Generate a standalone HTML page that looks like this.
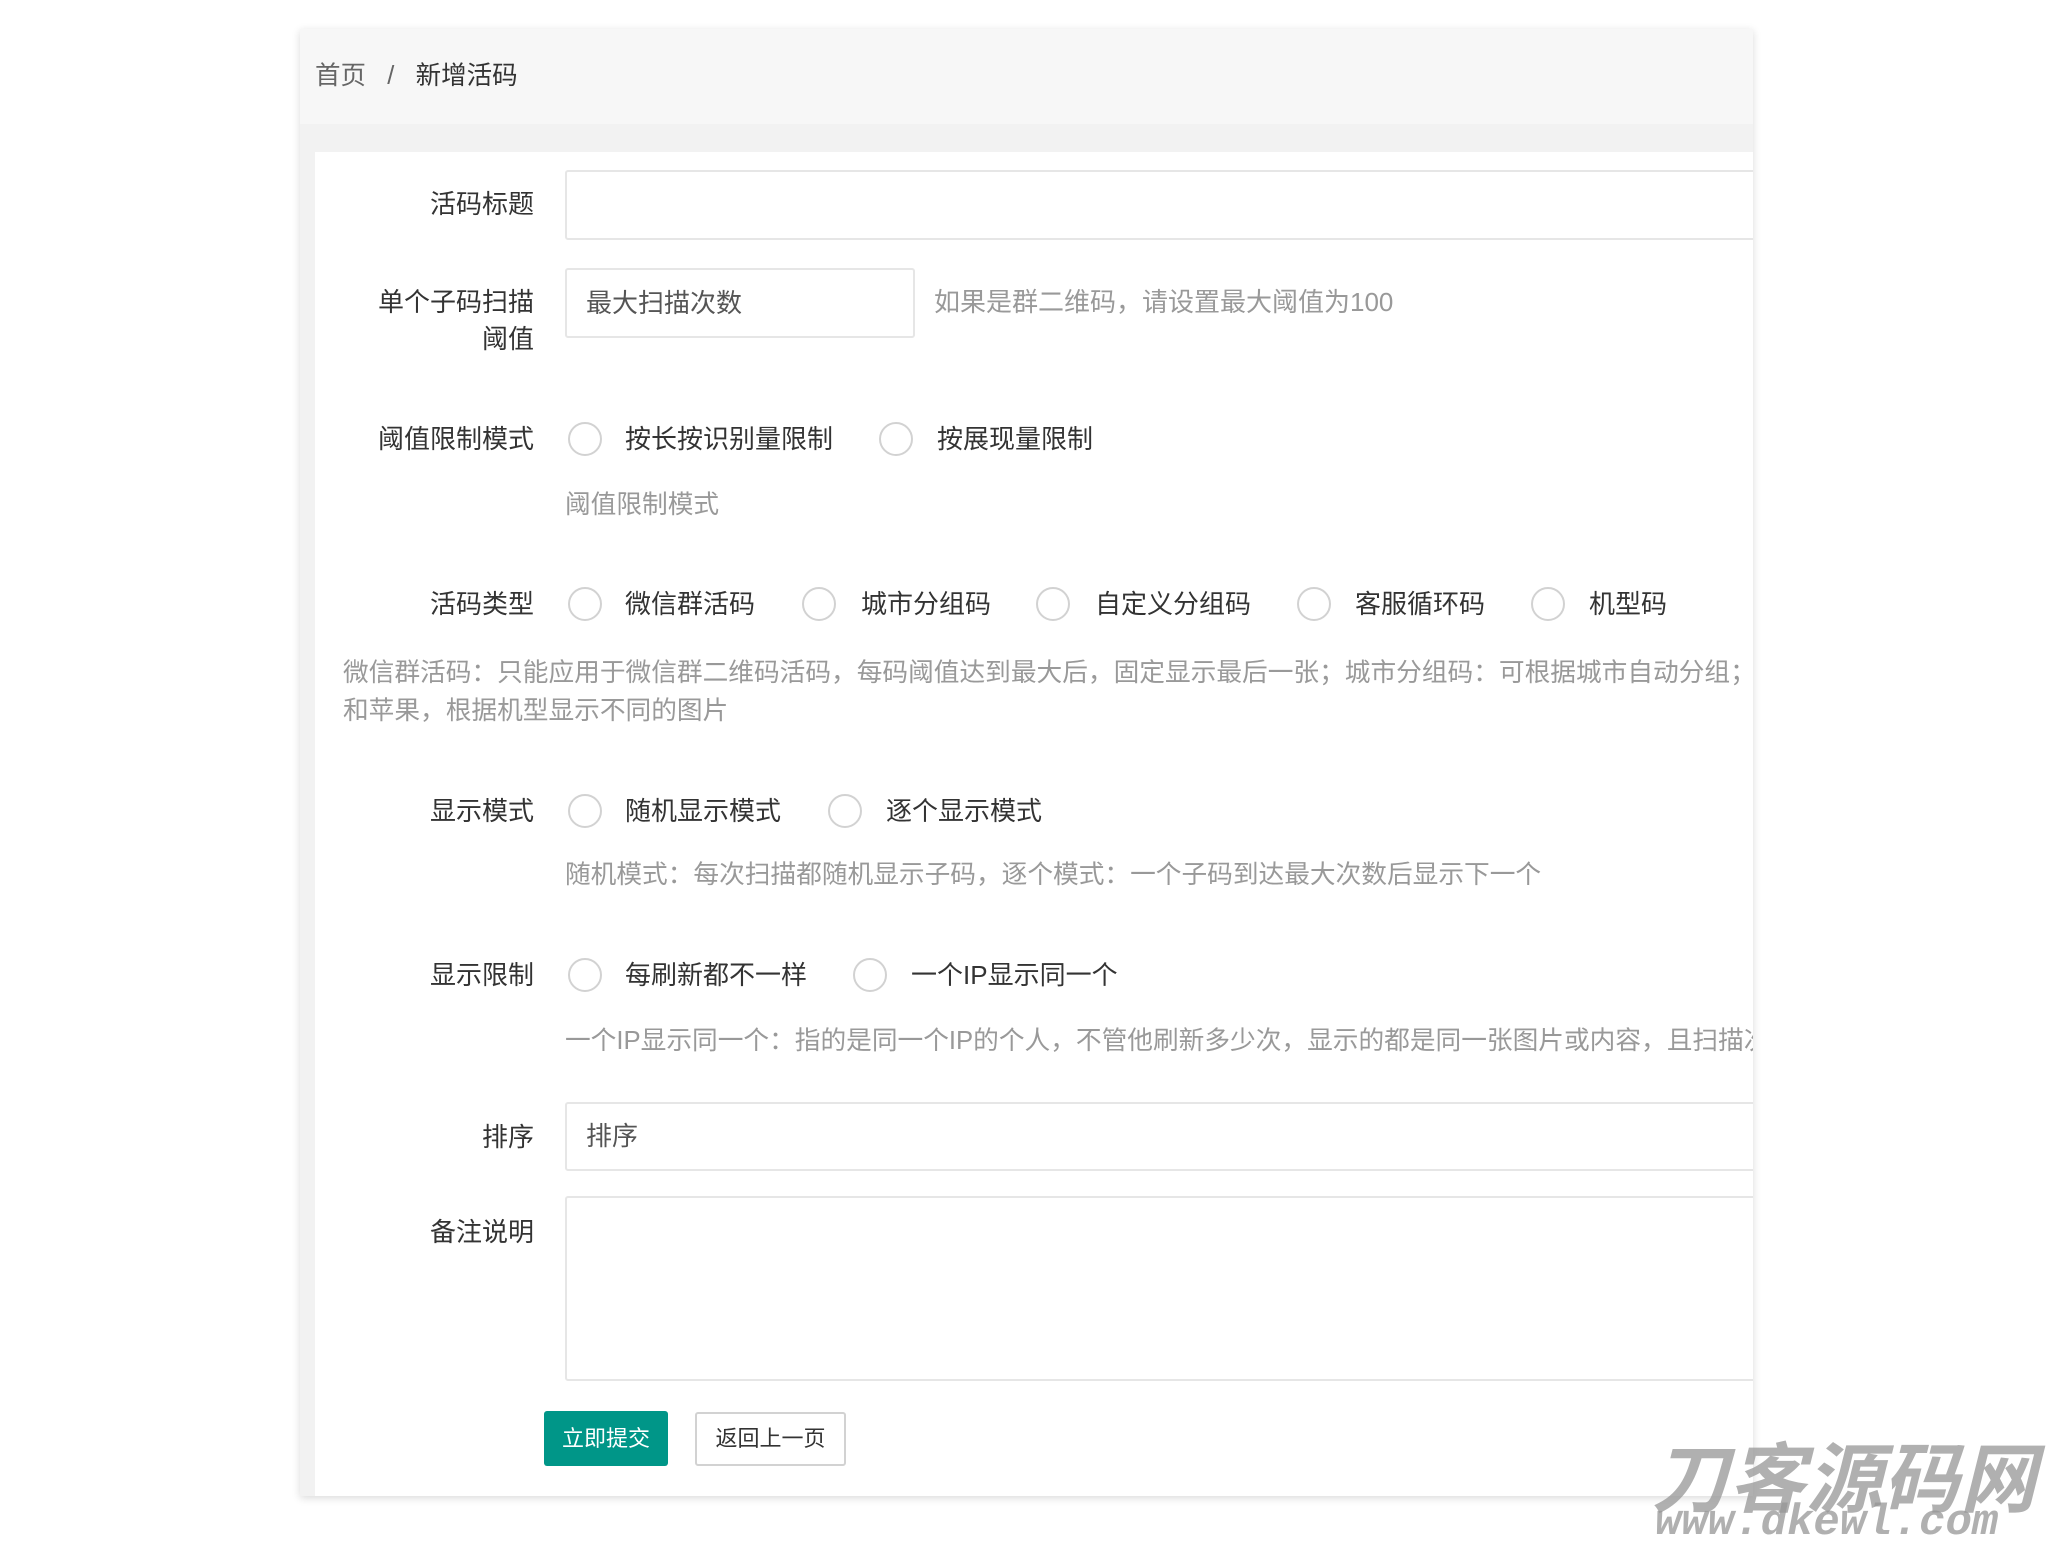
<!DOCTYPE html>
<html><head><meta charset="utf-8"><style>
*{margin:0;padding:0;box-sizing:border-box}
body{width:2053px;height:1545px;background:#fff;position:relative;overflow:hidden;font-family:"Liberation Sans","Noto Sans CJK SC",sans-serif;color:#333}
.card{position:absolute;left:300px;top:29px;width:1453px;height:1467px;background:#f2f2f2;box-shadow:0 2px 8px rgba(0,0,0,.15);overflow:hidden}
.bc{position:absolute;left:0;top:0;width:100%;height:95px;background:#f7f7f7;font-size:25.5px;line-height:95px;padding-left:15px;color:#666}
.bc b{font-weight:normal;color:#333}
.inner{position:absolute;left:15px;top:123px;right:0;bottom:0;background:#fff}
.a{position:absolute;white-space:nowrap}
.lbl{font-size:26px;color:#333;text-align:right;width:300px;line-height:34px}
.inp{border:2px solid #e6e6e6;border-radius:3px;background:#fff;font-size:26px;color:#555;padding-left:19px}
.hint{font-size:25.7px;color:#999;line-height:34px}
.r{width:34px;height:34px;border:2px solid #d2d2d2;border-radius:50%;background:#fff}
.t{font-size:26px;color:#333;line-height:34px}
</style></head><body>
<div class="card">
<div class="bc">首页&nbsp;&nbsp;&nbsp;/&nbsp;&nbsp;&nbsp;<b>新增活码</b></div>
<div class="inner"></div>
</div>
<div style="position:absolute;left:300px;top:29px;width:1453px;height:1467px;overflow:hidden">
<div class="a lbl" style="left:-66px;top:158px">活码标题</div>
<div class="a inp" style="left:265px;top:141px;width:1300px;height:70px"></div>

<div class="a lbl" style="left:-66px;top:256px">单个子码扫描</div>
<div class="a lbl" style="left:-66px;top:293px">阈值</div>
<div class="a inp" style="left:265px;top:239px;width:350px;height:70px;line-height:66px">最大扫描次数</div>
<div class="a hint" style="left:634px;top:256px;font-size:26px">如果是群二维码，请设置最大阈值为100</div>

<div class="a lbl" style="left:-66px;top:393px">阈值限制模式</div>
<div class="a r" style="left:268px;top:393px"></div><div class="a t" style="left:325px;top:393px">按长按识别量限制</div>
<div class="a r" style="left:579px;top:393px"></div><div class="a t" style="left:637px;top:393px">按展现量限制</div>
<div class="a hint" style="left:265px;top:459px">阈值限制模式</div>

<div class="a lbl" style="left:-66px;top:558px">活码类型</div>
<div class="a r" style="left:268px;top:558px"></div><div class="a t" style="left:325px;top:558px">微信群活码</div>
<div class="a r" style="left:502px;top:558px"></div><div class="a t" style="left:561px;top:558px">城市分组码</div>
<div class="a r" style="left:736px;top:558px"></div><div class="a t" style="left:795px;top:558px">自定义分组码</div>
<div class="a r" style="left:997px;top:558px"></div><div class="a t" style="left:1055px;top:558px">客服循环码</div>
<div class="a r" style="left:1231px;top:558px"></div><div class="a t" style="left:1289px;top:558px">机型码</div>
<div class="a hint" style="left:43px;top:627px">微信群活码：只能应用于微信群二维码活码，每码阈值达到最大后，固定显示最后一张；城市分组码：可根据城市自动分组；自定义分组码</div>
<div class="a hint" style="left:43px;top:665px">和苹果，根据机型显示不同的图片</div>

<div class="a lbl" style="left:-66px;top:765px">显示模式</div>
<div class="a r" style="left:268px;top:765px"></div><div class="a t" style="left:325px;top:765px">随机显示模式</div>
<div class="a r" style="left:528px;top:765px"></div><div class="a t" style="left:586px;top:765px">逐个显示模式</div>
<div class="a hint" style="left:265px;top:829px">随机模式：每次扫描都随机显示子码，逐个模式：一个子码到达最大次数后显示下一个</div>

<div class="a lbl" style="left:-66px;top:929px">显示限制</div>
<div class="a r" style="left:268px;top:929px"></div><div class="a t" style="left:325px;top:929px">每刷新都不一样</div>
<div class="a r" style="left:553px;top:929px"></div><div class="a t" style="left:611px;top:929px">一个IP显示同一个</div>
<div class="a hint" style="left:265px;top:995px">一个IP显示同一个：指的是同一个IP的个人，不管他刷新多少次，显示的都是同一张图片或内容，且扫描次数</div>

<div class="a lbl" style="left:-66px;top:1091px">排序</div>
<div class="a inp" style="left:265px;top:1073px;width:1300px;height:69px;line-height:65px">排序</div>

<div class="a lbl" style="left:-66px;top:1186px">备注说明</div>
<div class="a inp" style="left:265px;top:1167px;width:1300px;height:185px"></div>

<div class="a" style="left:244px;top:1382px;width:124px;height:55px;background:#009688;border-radius:3px;color:#fff;font-size:22px;line-height:55px;text-align:center">立即提交</div>
<div class="a" style="left:395px;top:1383px;width:151px;height:54px;border:2px solid #d2d2d2;border-radius:3px;background:#fff;color:#333;font-size:22px;line-height:50px;text-align:center">返回上一页</div>
</div>
<div class="a" style="left:1652px;top:1418px;font-size:76px;font-weight:bold;font-style:italic;color:rgba(150,150,150,.75);letter-spacing:1px">刀客源码网</div>
<div class="a" style="left:1655px;top:1498px;font-size:44px;font-weight:bold;font-style:italic;color:rgba(150,150,150,.75);font-family:'Liberation Mono',monospace;letter-spacing:0px">www.dkewl.com</div>
</body></html>
